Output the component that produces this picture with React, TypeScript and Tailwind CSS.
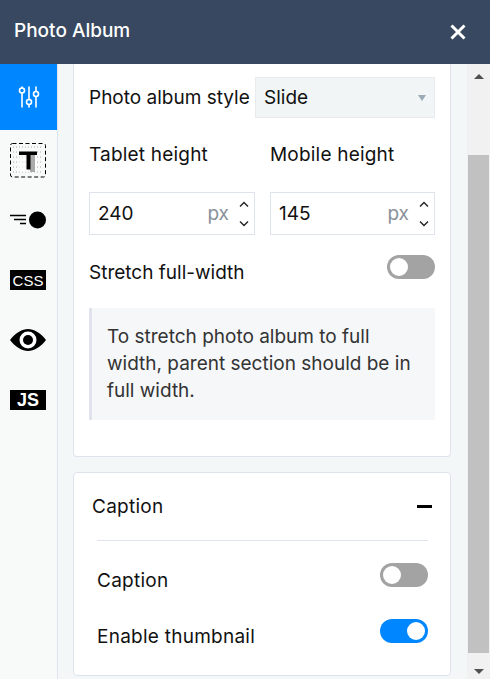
// App.tsx
import React from 'react';

const Toggle = ({ on }: { on?: boolean }) => (
  <div className={`flex h-6 w-12 shrink-0 items-center rounded-full px-[3px] ${on ? 'justify-end bg-[#0087ff]' : 'justify-start bg-[#a3a3a3]'}`}>
    <span className="h-[18px] w-[18px] rounded-full bg-white" />
  </div>
);

const Stepper = () => (
  <svg width="12" height="28" viewBox="0 0 12 28" fill="none" stroke="#222" strokeWidth="1.4" className="shrink-0">
    <path d="M2 6.5 L6 2.5 L10 6.5" />
    <path d="M2 21.5 L6 25.5 L10 21.5" />
  </svg>
);

const NumberField = ({ value, className }: { value: string; className: string }) => (
  <div className={`flex h-[43px] items-center border border-[#dfe3ee] bg-white pl-2 pr-[4px] ${className}`}>
    <span className="flex-1 pt-[2px] text-[#111]">{value}</span>
    <span className="mr-[9px] pt-[2px] text-[#8a9099]">px</span>
    <Stepper />
  </div>
);

const SidebarIcon = ({ children, active }: { children: React.ReactNode; active?: boolean }) => (
  <div className={`flex w-full items-center justify-center ${active ? 'h-[66px] bg-[#0087ff]' : 'h-[60px] pr-px'}`}>{children}</div>
);

const BlackTag = ({ label, bold }: { label: string; bold?: boolean }) => (
  <div
    className={`flex h-5 w-9 items-center justify-center bg-black leading-none text-white ${bold ? 'text-[18px] font-bold' : 'text-[15px]'}`}
    style={{ fontFamily: '"Liberation Sans", sans-serif' }}
  >
    {label}
  </div>
);

export default function App() {
  return (
    <div className="flex h-[679px] w-[490px] flex-col overflow-hidden bg-white font-['Inter',sans-serif] text-[19px] text-[#111]">
      <header className="flex h-16 shrink-0 items-center justify-between bg-[#374860] pb-[3px] pl-[14px] pr-[24px]">
        <h1 className="mt-[2px] text-[19px] font-medium text-white">Photo Album</h1>
        <svg width="16" height="16" viewBox="0 0 16 16" stroke="white" strokeWidth="3" className="mt-[2px]">
          <path d="M1.5 1.5 L14.5 14.5 M14.5 1.5 L1.5 14.5" />
        </svg>
      </header>

      <div className="flex min-h-0 flex-1">
        <nav className="flex w-[58px] shrink-0 flex-col items-center border-r border-[#dfe3ee] bg-[#f8f9f9]">
          <SidebarIcon active>
            <svg width="22" height="22" viewBox="0 0 22 22" fill="none" stroke="white" strokeWidth="1.6" strokeLinecap="round">
              <path d="M4 1 V2 M4 7 V21 M11 1 V13.5 M11 18.5 V21 M18 1 V5.5 M18 10.5 V21" />
              <circle cx="4" cy="4.5" r="2.5" />
              <circle cx="11" cy="16" r="2.5" />
              <circle cx="18" cy="8" r="2.5" />
            </svg>
          </SidebarIcon>
          <SidebarIcon>
            <svg width="36" height="36" viewBox="0 0 36 36" fill="none">
              <rect x="0.5" y="1.5" width="35" height="33.5" rx="2" stroke="black" strokeWidth="1" strokeDasharray="4 2.5" />
              <path d="M3 5 H33 M3 10 H33 M3 15 H33 M3 20 H33 M3 25 H33 M3 30 H33" stroke="#aaa" strokeWidth="1" strokeDasharray="1 2" />
              <rect x="9" y="8" width="18" height="22" fill="white" fillOpacity="0.55" />
              <rect x="20" y="12" width="5" height="18" fill="#aaa" />
              <path d="M9 9.5 H27 V13 H20.5 V27.5 H16.5 V13 H9 Z" fill="black" />
            </svg>
          </SidebarIcon>
          <SidebarIcon>
            <svg width="36" height="18" viewBox="0 0 36 18" fill="none">
              <path d="M0 4.5 H16 M4 8.5 H16 M10 12.5 H16" stroke="black" strokeWidth="1.5" />
              <circle cx="27.5" cy="9" r="8.5" fill="black" />
            </svg>
          </SidebarIcon>
          <SidebarIcon>
            <BlackTag label="CSS" />
          </SidebarIcon>
          <SidebarIcon>
            <svg width="36" height="22" viewBox="0 0 36 22">
              <path d="M0 11 C6 3.5 12 0 18 0 C24 0 30 3.5 36 11 C30 18.5 24 22 18 22 C12 22 6 18.5 0 11 Z" fill="black" />
              <circle cx="18" cy="11" r="8.5" fill="white" />
              <circle cx="18" cy="11" r="5" fill="black" />
            </svg>
          </SidebarIcon>
          <SidebarIcon>
            <BlackTag label="JS" bold />
          </SidebarIcon>
        </nav>

        <main className="flex min-w-0 flex-1 flex-col gap-[15px] bg-[#f4f7f8] pl-[15px] pr-[15px]">
          <section className="h-[393px] shrink-0 rounded-b border-x border-b border-[#dfe3ee] bg-white px-[15px] pt-[13px]">
            <div className="flex h-[41px] items-center justify-between">
              <span className="pt-[2px]">Photo album style</span>
              <div className="flex h-[41px] w-[180px] items-center justify-between border border-[#e8ebee] bg-[#f2f5f6] pl-2 pr-[8px]">
                <span className="pt-[2px]">Slide</span>
                <span className="h-0 w-0 border-x-[4px] border-t-[6px] border-x-transparent border-t-[#9aa9b8]" />
              </div>
            </div>
            <div className="mt-[23px] flex gap-[15px] tracking-[0.2px]">
              <span className="w-[166px] leading-[28px]">Tablet height</span>
              <span className="leading-[28px]">Mobile height</span>
            </div>
            <div className="mt-[23px] flex gap-[15px]">
              <NumberField value="240" className="w-[166px]" />
              <NumberField value="145" className="w-[165px]" />
            </div>
            <div className="mt-[20px] flex h-6 items-start justify-between">
              <span className="leading-[36px]">Stretch full-width</span>
              <Toggle />
            </div>
            <div className="mt-[29px] h-[112px] border-l-[3px] border-[#dfe3ee] bg-[#f5f7f9] pl-[15px] pr-[12px] pt-[15px] leading-[27px] text-[#333]">
              To stretch photo album to full width, parent section should be in full width.
            </div>
          </section>

          <section className="h-[204px] shrink-0 rounded border border-[#dfe3ee] bg-white tracking-[0.25px]">
            <div className="flex h-[67px] items-center justify-between pl-[18px] pr-[18px]">
              <span className="pt-[2px]">Caption</span>
              <span className="h-[3px] w-[15px] bg-black" />
            </div>
            <div className="ml-[23px] mr-[22px] border-t border-[#dfe3ee] pt-[22px]">
              <div className="flex h-6 items-start justify-between">
                <span className="leading-[36px]">Caption</span>
                <Toggle />
              </div>
              <div className="mt-8 flex h-6 items-start justify-between">
                <span className="leading-[36px]">Enable thumbnail</span>
                <Toggle on />
              </div>
            </div>
          </section>
        </main>

        <aside className="flex w-6 shrink-0 flex-col items-center border-l border-[#f4f7f8] bg-[#f1f1f1]">
          <div className="flex h-[91px] w-full justify-center pt-[10px]">
            <span className="h-0 w-0 border-x-[5px] border-b-[5px] border-x-transparent border-b-[#505050]" />
          </div>
          <div className="h-[498px] w-[21px] bg-[#c1c1c1]" />
          <div className="flex flex-1 items-end pb-[5px]">
            <span className="h-0 w-0 border-x-[5px] border-t-[5px] border-x-transparent border-t-[#505050]" />
          </div>
        </aside>
      </div>
    </div>
  );
}
